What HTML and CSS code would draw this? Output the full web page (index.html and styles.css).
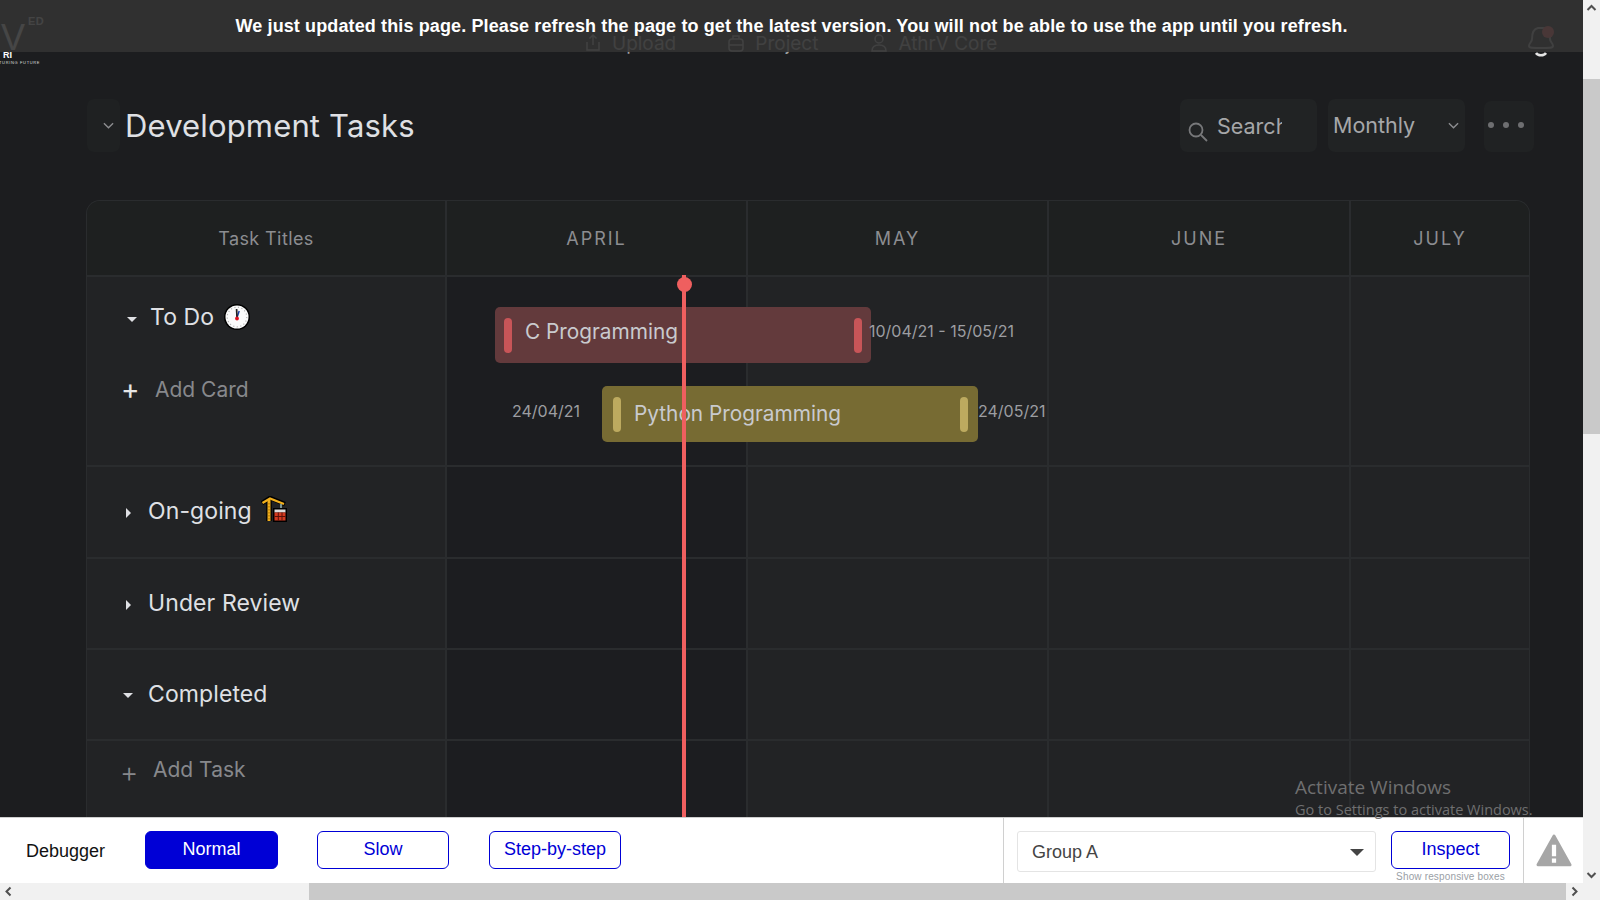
FILE: index.html
```html
<!DOCTYPE html>
<html lang="en">
<head>
<meta charset="utf-8">
<title>Development Tasks</title>
<link rel="stylesheet" href="styles.css">
</head>
<body>
<div class="window">
  <div class="viewport">
    <main class="content">
      <header class="nav">
        <div class="logo">
          <span class="logo-v">V</span><span class="logo-ed">ED</span><span class="logo-ri">RI</span><span class="logo-tag">TURING FUTURE</span>
        </div>
        <nav class="nav-links">
          <a class="nav-link nav-upload"><svg class="nav-icon" viewBox="0 0 20 20"><path d="M4 9v8h12V9M10 12V2M6.500 5.500 10 2l3.500 3.500"/></svg>Upload</a>
          <a class="nav-link nav-project"><svg class="nav-icon" viewBox="0 0 20 20"><rect x="3" y="6" width="14" height="12" rx="3"/><path d="M7 6V3h6v3M3 12h14"/></svg>Project</a>
          <a class="nav-link nav-core"><svg class="nav-icon" viewBox="0 0 20 20"><circle cx="10" cy="6" r="4"/><path d="M3 18c0-4 3-6 7-6s7 2 7 6z"/></svg>AthrV Core</a>
        </nav>
        <div class="bell">
          <svg viewBox="0 0 30 34" class="bell-icon"><path class="bell-body" d="M12 5c-5 1-6 6-6 11 0 3-3 4-3 7 0 2 3 2 12 2s12 0 12-2c0-3-3-4-3-7 0-6-2-11-7-11z"/><path class="bell-clap" d="M10 30c2 3 8 3 10 0"/><circle class="bell-dot" cx="22" cy="9" r="6"/></svg>
        </div>
      </header>

      <section class="title-row">
        <button class="chip collapse"><svg class="chev" viewBox="0 0 12 8"><path d="M1 1l5 5 5-5"/></svg></button>
        <h1 class="title">Development Tasks</h1>
        <div class="tools">
          <div class="chip search"><svg class="search-icon" viewBox="0 0 20 20"><circle cx="8" cy="8" r="6.500"/><path d="M13 13l6 6"/></svg><span class="search-text">Search</span></div>
          <div class="chip month"><span>Monthly</span><svg class="chev" viewBox="0 0 12 8"><path d="M1 1l5 5 5-5"/></svg></div>
          <div class="chip more"><i class="dot"></i><i class="dot"></i><i class="dot"></i></div>
        </div>
      </section>

      <section class="gantt">
        <div class="cell head head-task">Task Titles</div>
        <div class="cell head month-name">APRIL</div>
        <div class="cell head month-name">MAY</div>
        <div class="cell head month-name">JUNE</div>
        <div class="cell head month-name last">JULY</div>

        <div class="cell task task-open">
          <div class="task-title title-todo"><i class="tri tri-down"></i>To Do
            <svg class="emoji emoji-clock" viewBox="0 0 26 26"><circle cx="13" cy="13" r="13" fill="#000"/><circle cx="13" cy="13" r="11.500" fill="#fbfbfb"/><circle cx="13" cy="13" r="9.800" fill="none" stroke="#b5b5b5" stroke-width="1.200" stroke-dasharray="1.200 2.400"/><path d="M13 13.500 15.200 7" stroke="#1a3fa8" stroke-width="1.500"/><path d="M13 13.500 12.600 5" stroke="#222" stroke-width="1.700"/><circle cx="13" cy="14.500" r="1.900" fill="#e01020"/></svg>
          </div>
          <div class="add add-card"><i class="plus">+</i>Add Card</div>
        </div>
        <div class="cell april"></div><div class="cell"></div><div class="cell"></div><div class="cell last"></div>

        <div class="cell task short"><div class="task-title"><i class="tri tri-right"></i>On-going
          <svg class="emoji emoji-crane" viewBox="0 0 26 26"><path d="M1 7l8-5 15 6" fill="none" stroke="#000" stroke-width="4.500"/><path d="M8 4v21" stroke="#000" stroke-width="5.500"/><path d="M8 4v21" stroke="#f2b01e" stroke-width="3"/><path d="M8 7v18" stroke="#a86e00" stroke-width="1" stroke-dasharray="1.500 1.500"/><path d="M1.500 7l7.500-4.500 14 5.500" fill="none" stroke="#f2b01e" stroke-width="2.300"/><path d="M20 8v5" stroke="#9bb" stroke-width="1.500"/><rect x="12" y="12" width="14" height="14" fill="#000"/><rect x="13.500" y="13.500" width="11" height="3" fill="#ddd"/><rect x="13.500" y="16.500" width="11" height="8" fill="#d23a20"/><path d="M13.500 20.500h11M17.300 16.500v8M21 16.500v8" stroke="#5a1008" stroke-width="1"/></svg>
        </div></div>
        <div class="cell april"></div><div class="cell"></div><div class="cell"></div><div class="cell last"></div>

        <div class="cell task short"><div class="task-title"><i class="tri tri-right"></i>Under Review</div></div>
        <div class="cell april"></div><div class="cell"></div><div class="cell"></div><div class="cell last"></div>

        <div class="cell task short"><div class="task-title"><i class="tri tri-down"></i>Completed</div></div>
        <div class="cell april"></div><div class="cell"></div><div class="cell"></div><div class="cell last"></div>

        <div class="cell task add-row"><div class="add add-task"><i class="plus plus-grey">+</i>Add Task</div></div>
        <div class="cell april"></div><div class="cell"></div><div class="cell"></div><div class="cell last"></div>

        <div class="bar bar-red">
          <i class="grip"></i><span class="bar-name">C Programming</span><i class="grip"></i>
          <span class="date date-right">10/04/21 - 15/05/21</span>
        </div>
        <div class="bar bar-yellow">
          <span class="date date-left">24/04/21</span>
          <i class="grip"></i><span class="bar-name">Python Programming</span><i class="grip"></i>
          <span class="date date-right">24/05/21</span>
        </div>
        <div class="today"><i class="today-dot"></i></div>
      </section>
    </main>

    <footer class="debugger">
      <span class="debug-label">Debugger</span>
      <button class="btn btn-on btn-normal">Normal</button>
      <button class="btn btn-slow">Slow</button>
      <button class="btn btn-step">Step-by-step</button>
      <div class="debug-right">
        <div class="select"><span>Group A</span><i class="select-caret"></i></div>
        <div class="inspect"><button class="btn btn-inspect">Inspect</button><small class="hint">Show responsive boxes</small></div>
      </div>
      <div class="warn">
        <svg viewBox="0 0 34 32" class="warn-icon"><path d="M17 2 32 29H2z" fill="#a6a6a6" stroke="#a6a6a6" stroke-width="3" stroke-linejoin="round"/><path d="M15 10h4v11h-4zM15 23h4v4h-4z" fill="#fff"/></svg>
      </div>
    </footer>

    <div class="banner">We just updated this page. Please refresh the page to get the latest version. You will not be able to use the app until you refresh.</div>
    <div class="activate"><div class="activate-a">Activate Windows</div><div class="activate-b">Go to Settings to activate Windows.</div></div>
  </div>

  <div class="vbar">
    <svg class="arrow" viewBox="0 0 17 17"><path d="M4.500 10 8.500 6l4 4"/></svg>
    <div class="vthumb"></div>
    <svg class="arrow arrow-end" viewBox="0 0 17 17"><path d="M4.500 7l4 4 4-4"/></svg>
  </div>
  <div class="hbar">
    <svg class="arrow" viewBox="0 0 17 17"><path d="M10.500 4.500l-4 4 4 4"/></svg>
    <div class="hthumb"></div>
    <svg class="arrow" viewBox="0 0 17 17"><path d="M6.500 4.500l4 4-4 4"/></svg>
  </div>
  <div class="corner"></div>
</div>
</body>
</html>
```
FILE: styles.css
```css
* { box-sizing: border-box; }
html, body { margin: 0; height: 100%; overflow: hidden; }
body { font-family: Inter, "Liberation Sans", sans-serif; background: #1c1d1f; }
i { font-style: normal; display: block; }

.window { display: grid; grid-template-columns: 1583px 17px; grid-template-rows: 883px 17px; width: 1600px; height: 900px; }
.viewport { position: relative; display: flex; flex-direction: column; overflow: hidden; }
.content { height: 817px; overflow: hidden; background: #1c1d1f; }

/* top nav, seen through the banner */
.nav { position: relative; display: flex; align-items: center; height: 52px; }
.logo { position: relative; width: 50px; height: 66px; align-self: flex-start; color: #fff; font-family: "Liberation Sans", sans-serif; flex: none; }
.logo span { position: absolute; line-height: 1; }
.logo-v { left: 1px; top: 20px; font-size: 36px; color: #c9c9c9; }
.logo-ed { left: 28px; top: 16px; font-size: 11px; font-weight: 700; color: #bbb; letter-spacing: .5px; }
.logo-ri { left: 3px; top: 51px; font-size: 9px; font-weight: 700; }
.logo-tag { left: -1px; top: 61px; font-size: 4px; letter-spacing: .65px; white-space: nowrap; color: #ddd; }
.nav-links { display: flex; align-items: center; margin: 34px 0 0 533px; }
.nav-link { display: flex; align-items: center; gap: 9px; font-size: 19px; color: #a3a3a3; }
.nav-icon { width: 20px; height: 20px; fill: none; stroke: #a3a3a3; stroke-width: 1.500; }
.nav-project { margin-left: 50px; }
.nav-core { margin-left: 51px; }
.bell { margin: 28px 27px 0 auto; }
.bell-icon { display: block; width: 30px; height: 34px; }
.bell-body { fill: none; stroke: #9a9a9a; stroke-width: 2; }
.bell-clap { fill: none; stroke: #e4e4e4; stroke-width: 2.500; }
.bell-dot { fill: #e25555; }

/* title row */
.title-row { display: flex; align-items: stretch; height: 53px; margin-top: 47px; padding: 0 49px 0 87px; }
.chip { background: #212324; border: 0; border-radius: 7px; padding: 0; }
.collapse { width: 33px; display: flex; align-items: center; justify-content: center; background: #1f2122; padding-left: 9px; }
.chev { width: 11px; height: 8px; fill: none; stroke: #8c8d90; stroke-width: 1.500; flex: none; }
.title { margin: 0 0 0 5px; font-size: 31px; font-weight: 400; line-height: 54px; color: #dfe0e4; letter-spacing: .15px; }
.tools { margin-left: auto; display: flex; align-items: stretch; }
.search { width: 137px; display: flex; align-items: center; padding-left: 8px; overflow: hidden; }
.search-icon { width: 20px; height: 20px; margin-top: 12px; fill: none; stroke: #77787a; stroke-width: 1.800; flex: none; }
.search-text { width: 65px; margin-left: 9px; font-size: 21.500px; color: #a6a7a9; overflow: hidden; white-space: nowrap; }
.month { width: 137px; margin-left: 11px; display: flex; align-items: center; justify-content: space-between; padding: 0 6px 0 5px; font-size: 21.500px; color: #a6a7a9; }
.month span { margin-top: -1px; }
.more { width: 50px; margin: 2px 0 0 19px; display: flex; gap: 9px; padding: 21px 0 0 4px; background: #202223; }
.dot { width: 6px; height: 6px; border-radius: 50%; background: #6e6f71; }

/* gantt table */
.gantt { position: relative; display: grid; grid-template-columns: 360px 301px 301px 302px 178px; grid-template-rows: 76px 190px 92px 91px 91px 120px; width: 1444px; margin: 48px 0 0 86px; border: 1px solid #2a2c2e; border-bottom: 0; border-radius: 14px 14px 0 0; overflow: hidden; background: #222325; }
.cell { border-right: 2px solid #2a2c2e; border-bottom: 2px solid #2a2c2e; }
.cell.last { border-right: 0; }
.head { display: flex; align-items: center; justify-content: center; padding-top: 1px; background: #1e2020; color: #8c8d91; font-size: 18px; }
.head-task { letter-spacing: .4px; }
.month-name { letter-spacing: 2px; }
.april { background: #1c1d20; }
.task { color: #dfe0e4; font-size: 23px; }
.short { display: flex; align-items: center; padding: 0 0 2px 36px; }
.task-open { padding: 26px 0 0 39px; }
.task-title { display: flex; align-items: center; line-height: 28px; letter-spacing: .1px; white-space: nowrap; }
.tri { width: 0; height: 0; flex: none; }
.tri-down { border-left: 5px solid transparent; border-right: 5px solid transparent; border-top: 5px solid #dfe0e4; margin: 4px 13px 0 0; }
.tri-right { border-top: 5px solid transparent; border-bottom: 5px solid transparent; border-left: 5px solid #dfe0e4; margin: 4px 17px 0 3px; }
.task-open .tri-down { margin-left: 1px; margin-right: 13px; }
.short .tri-down { margin-left: 0; margin-right: 15px; }
.emoji { width: 26px; height: 26px; margin-left: 11px; flex: none; }
.emoji-clock { margin-left: 10px; }
.emoji-crane { margin: -4px 0 0 9px; }
.add { display: flex; align-items: center; color: #87888c; font-size: 21px; line-height: 28px; }
.add-card { margin: 45px 0 0 -5px; }
.plus { width: 34px; margin-top: -2px; color: #e6e6e6; font-size: 28px; font-weight: 400; line-height: 28px; }
.add-row { padding: 12px 0 0 33px; }
.plus-grey { width: 33px; color: #87888c; font-weight: 300; margin-top: 5px; }

/* bars and today line */
.bar { position: absolute; display: flex; align-items: center; justify-content: space-between; width: 376px; height: 56px; padding: 0 9px; border-radius: 5px; color: #c9cace; font-size: 20.800px; }
.bar-red { left: 408px; top: 106px; background: #633a3c; }
.bar-yellow { left: 515px; top: 185px; background: #776b33; padding: 0 10px 0 11px; }
.grip { width: 8px; height: 35px; border-radius: 4px; flex: none; }
.bar-red .grip { background: #c85558; }
.bar-yellow .grip { background: #bdaa5f; }
.bar-name { flex: 1; padding-left: 13px; white-space: nowrap; margin-top: -2px; }
.bar-red .bar-name { margin-top: -7px; }
.date { position: absolute; font-size: 16px; color: #9c9da1; white-space: nowrap; }
.date-right { left: 100%; margin-left: -2px; top: 14px; }
.bar-yellow .date-right { margin-left: 0; top: 15px; }
.date-left { right: 100%; margin-right: 22px; top: 15px; }
.today { position: absolute; left: 595px; top: 74px; width: 4px; height: 600px; background: #ef5f5f; }
.today-dot { position: absolute; left: -5px; top: 2px; width: 15px; height: 15px; border-radius: 50%; background: #ef5f5f; }

/* debugger */
.debugger { display: flex; align-items: center; height: 66px; background: #fff; border-top: 1px solid #cfcfcf; font-family: "Liberation Sans", sans-serif; font-size: 18px; color: #111; }
.debug-label { width: 145px; padding-left: 26px; flex: none; margin-top: 1px; }
.btn { height: 38px; border: 1.500px solid #0000d6; border-radius: 6px; background: #fff; color: #0000d6; font: 18px "Liberation Sans", sans-serif; padding: 0 0 2px; margin-top: -1px; }
.btn-normal { width: 133px; }
.btn-on { background: #0000d6; color: #fff; }
.btn-slow { width: 132px; margin-left: 39px; }
.btn-step { width: 132px; margin-left: 40px; }
.debug-right { display: flex; align-items: flex-start; align-self: stretch; width: 521px; margin-left: 382px; padding: 13px 0 0 13px; border-left: 1px solid #d0d0d0; border-right: 1px solid #d0d0d0; flex: none; }
.select { display: flex; align-items: center; justify-content: space-between; width: 359px; height: 41px; padding: 2px 11px 0 14px; border: 1px solid #e4e4e4; border-radius: 3px; color: #444; }
.select-caret { width: 0; height: 0; border-left: 7px solid transparent; border-right: 7px solid transparent; border-top: 7px solid #444; }
.inspect { display: flex; flex-direction: column; align-items: center; width: 119px; margin-left: 15px; }
.btn-inspect { width: 119px; margin-top: 0; padding: 0 0 1px; flex: none; }
.hint { margin-top: 1px; font-size: 10px; line-height: 13px; color: #9aa0a6; white-space: nowrap; letter-spacing: .15px; }
.warn { margin-left: 12px; }
.warn-icon { display: block; width: 36px; height: 34px; }

/* overlays */
.banner { position: absolute; left: 0; top: 0; width: 100%; height: 52px; background: rgba(51, 51, 51, .88); color: #fff; font: 700 18px/52px "Liberation Sans", sans-serif; letter-spacing: .12px; text-align: center; white-space: nowrap; }
.activate { position: absolute; left: 1295px; top: 775px; font-family: "Open Sans", sans-serif; color: #6f6f70; white-space: nowrap; }
.activate-a { font-size: 19px; line-height: 25px; }
.activate-b { font-size: 14.500px; line-height: 20px; }

/* scrollbars */
.vbar { display: flex; flex-direction: column; background: #f1f1f1; }
.vthumb { height: 355px; margin-top: 62px; background: #c9c9c9; }
.arrow { display: block; width: 17px; height: 17px; flex: none; fill: none; stroke: #505050; stroke-width: 2; }
.arrow-end { margin-top: auto; }
.hbar { display: flex; background: #f1f1f1; }
.hthumb { flex: 1; margin-left: 292px; background: #c9c9c9; }
.corner { background: #f1f1f1; }
```
